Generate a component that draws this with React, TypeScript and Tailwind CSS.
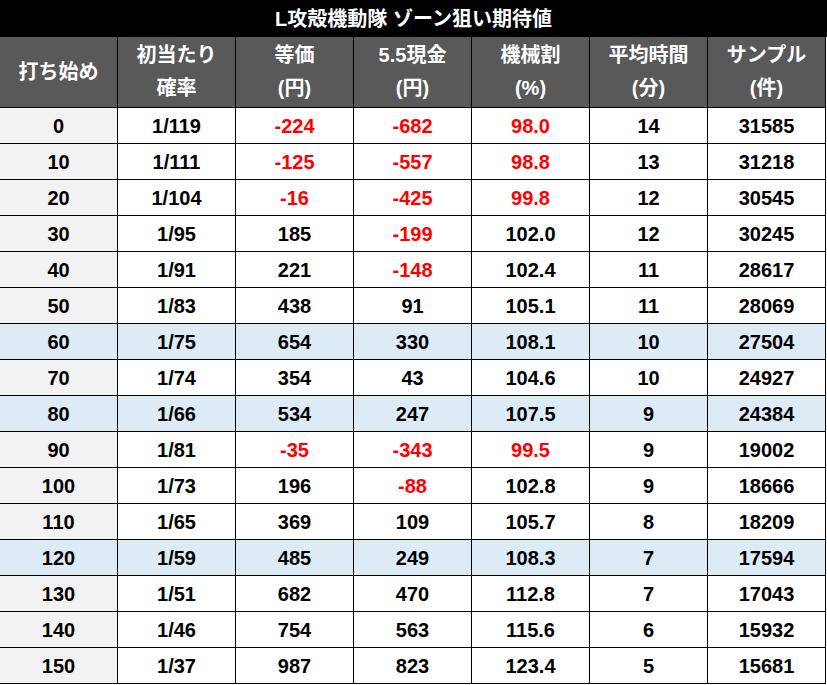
import React from "react";

const rows: [string, string, string, string, string, string, string, boolean][] = [
  ["0", "1/119", "-224", "-682", "98.0", "14", "31585", false],
  ["10", "1/111", "-125", "-557", "98.8", "13", "31218", false],
  ["20", "1/104", "-16", "-425", "99.8", "12", "30545", false],
  ["30", "1/95", "185", "-199", "102.0", "12", "30245", false],
  ["40", "1/91", "221", "-148", "102.4", "11", "28617", false],
  ["50", "1/83", "438", "91", "105.1", "11", "28069", false],
  ["60", "1/75", "654", "330", "108.1", "10", "27504", true],
  ["70", "1/74", "354", "43", "104.6", "10", "24927", false],
  ["80", "1/66", "534", "247", "107.5", "9", "24384", true],
  ["90", "1/81", "-35", "-343", "99.5", "9", "19002", false],
  ["100", "1/73", "196", "-88", "102.8", "9", "18666", false],
  ["110", "1/65", "369", "109", "105.7", "8", "18209", false],
  ["120", "1/59", "485", "249", "108.3", "7", "17594", true],
  ["130", "1/51", "682", "470", "112.8", "7", "17043", false],
  ["140", "1/46", "754", "563", "115.6", "6", "15932", false],
  ["150", "1/37", "987", "823", "123.4", "5", "15681", false],
];

const headers: string[][] = [
  ["打ち始め"],
  ["初当たり", "確率"],
  ["等価", "(円)"],
  ["5.5現金", "(円)"],
  ["機械割", "(%)"],
  ["平均時間", "(分)"],
  ["サンプル", "(件)"],
];

const font = { fontFamily: '"Liberation Sans", "Noto Sans CJK JP", sans-serif' };

function isRed(col: number, v: string) {
  if (col === 2 || col === 3) return v.startsWith("-");
  if (col === 4) return parseFloat(v) < 100;
  return false;
}

export default function App() {
  return (
    <div className="w-[827px] h-[685px] bg-white font-bold" style={font}>
      <div className="h-[37px] bg-black text-white flex items-center justify-center text-[20px]">
        L攻殻機動隊 ゾーン狙い期待値
      </div>
      <div className="grid grid-cols-[repeat(7,118px)] h-[71px]">
        {headers.map((h, i) => (
          <div
            key={i}
            className="bg-[#595959] text-white border-r border-b border-black flex flex-col items-center justify-center text-[20px] leading-[33px]"
          >
            {h.map((l, j) => (
              <div key={j}>{l}</div>
            ))}
          </div>
        ))}
      </div>
      {rows.map((r, ri) => {
        const blue = r[7];
        return (
          <div key={ri} className="grid grid-cols-[repeat(7,118px)] h-[36px]">
            {r.slice(0, 7).map((v, ci) => {
              const bg = blue ? "bg-[#ddebf7]" : ci === 0 ? "bg-[#f2f2f2]" : "bg-white";
              const color = isRed(ci, v as string) ? "text-[#ff0000]" : "text-black";
              return (
                <div
                  key={ci}
                  className={`${bg} ${color} border-r border-b border-black flex items-center justify-center text-[20px]`}
                >
                  {v as string}
                </div>
              );
            })}
          </div>
        );
      })}
    </div>
  );
}
